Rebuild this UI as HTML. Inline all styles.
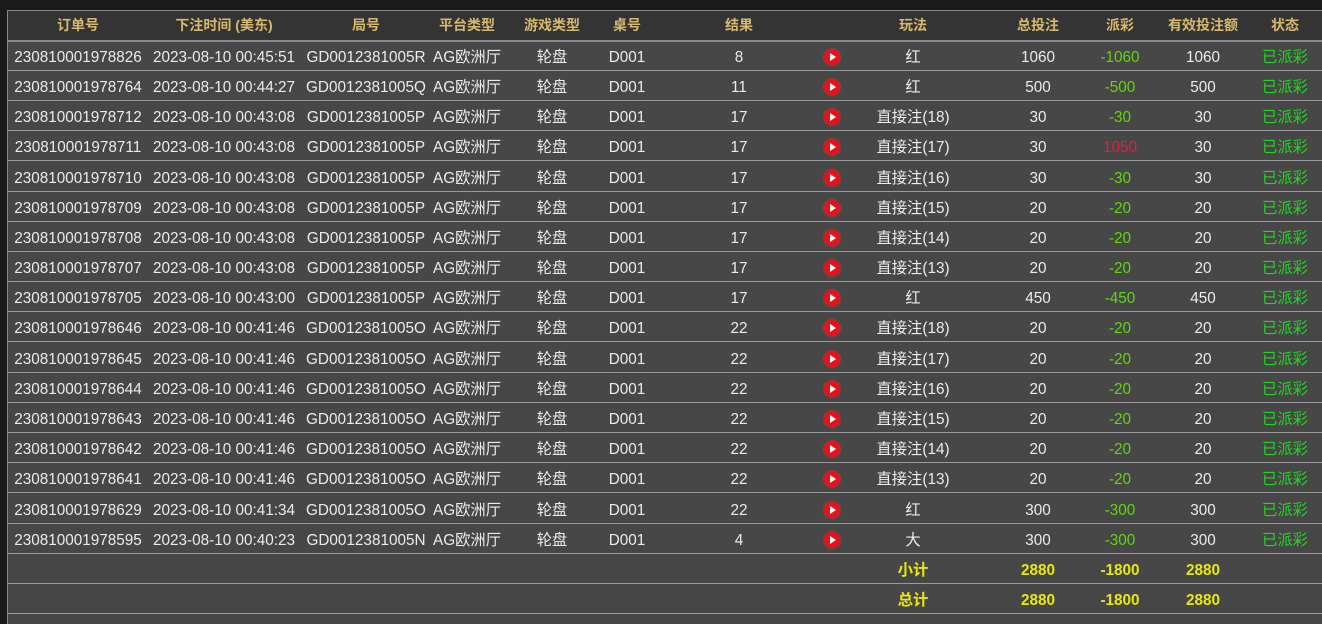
<!DOCTYPE html>
<html><head><meta charset="utf-8"><style>
body{margin:0;width:1322px;height:623px;background:#1b1b1b;overflow:hidden;font-family:"Liberation Sans","Noto Sans CJK SC",sans-serif;position:relative}
.t{position:absolute;left:7px;top:10px;width:1315px;height:613px;background:#474747;border-left:1px solid #8a8a8a;border-top:1px solid #8a8a8a}
.h{position:absolute;left:0;top:0;width:1315px;height:29px;background:#343434;border-bottom:2px solid #8a8a8a}
.r{position:absolute;left:0;width:1315px;height:29px;border-bottom:1px solid #9a9a9a}
.r span,.h span{position:absolute;top:2px;line-height:29px;transform:translateX(-50%);white-space:nowrap;font-size:15.3px;color:#ececec}
.h span{top:0;color:#d8b96c;font-weight:bold;font-size:14px;line-height:28px}
.a{left:70px}.b{left:216px}.c{left:358px}.d{left:459px}.e{left:544px}.f{left:619px}.g{left:731px}.i{left:824px}.j{left:905px}.k{left:1030px}.l{left:1112px}.m{left:1195px}.n{left:1277px}
.r span.l{color:#5fd80a}.r span.n{color:#1fd81f}.r span.red{color:#e0203a}
.r .i{width:16px;height:16px;top:8px;border-radius:50%;background:#e8101a;box-shadow:0 0 2px #f33}
.r .i:after{content:"";position:absolute;left:6px;top:4px;border-left:6px solid #fff;border-top:4px solid transparent;border-bottom:4px solid transparent}
.s span{color:#e8e810 !important;font-weight:bold}
</style></head><body><div class="t">
<div class="h"><span class="a">订单号</span><span class="b">下注时间 (美东)</span><span class="c">局号</span><span class="d">平台类型</span><span class="e">游戏类型</span><span class="f">桌号</span><span class="g">结果</span><span class="j">玩法</span><span class="k">总投注</span><span class="l">派彩</span><span class="m">有效投注额</span><span class="n">状态</span></div>
<div class="r" style="top:30px"><span class="a">230810001978826</span><span class="b">2023-08-10 00:45:51</span><span class="c">GD0012381005R</span><span class="d">AG欧洲厅</span><span class="e">轮盘</span><span class="f">D001</span><span class="g">8</span><span class="i"></span><span class="j">红</span><span class="k">1060</span><span class="l">-1060</span><span class="m">1060</span><span class="n">已派彩</span></div>
<div class="r" style="top:60px"><span class="a">230810001978764</span><span class="b">2023-08-10 00:44:27</span><span class="c">GD0012381005Q</span><span class="d">AG欧洲厅</span><span class="e">轮盘</span><span class="f">D001</span><span class="g">11</span><span class="i"></span><span class="j">红</span><span class="k">500</span><span class="l">-500</span><span class="m">500</span><span class="n">已派彩</span></div>
<div class="r" style="top:90px"><span class="a">230810001978712</span><span class="b">2023-08-10 00:43:08</span><span class="c">GD0012381005P</span><span class="d">AG欧洲厅</span><span class="e">轮盘</span><span class="f">D001</span><span class="g">17</span><span class="i"></span><span class="j">直接注(18)</span><span class="k">30</span><span class="l">-30</span><span class="m">30</span><span class="n">已派彩</span></div>
<div class="r" style="top:120px"><span class="a">230810001978711</span><span class="b">2023-08-10 00:43:08</span><span class="c">GD0012381005P</span><span class="d">AG欧洲厅</span><span class="e">轮盘</span><span class="f">D001</span><span class="g">17</span><span class="i"></span><span class="j">直接注(17)</span><span class="k">30</span><span class="l red">1050</span><span class="m">30</span><span class="n">已派彩</span></div>
<div class="r" style="top:151px"><span class="a">230810001978710</span><span class="b">2023-08-10 00:43:08</span><span class="c">GD0012381005P</span><span class="d">AG欧洲厅</span><span class="e">轮盘</span><span class="f">D001</span><span class="g">17</span><span class="i"></span><span class="j">直接注(16)</span><span class="k">30</span><span class="l">-30</span><span class="m">30</span><span class="n">已派彩</span></div>
<div class="r" style="top:181px"><span class="a">230810001978709</span><span class="b">2023-08-10 00:43:08</span><span class="c">GD0012381005P</span><span class="d">AG欧洲厅</span><span class="e">轮盘</span><span class="f">D001</span><span class="g">17</span><span class="i"></span><span class="j">直接注(15)</span><span class="k">20</span><span class="l">-20</span><span class="m">20</span><span class="n">已派彩</span></div>
<div class="r" style="top:211px"><span class="a">230810001978708</span><span class="b">2023-08-10 00:43:08</span><span class="c">GD0012381005P</span><span class="d">AG欧洲厅</span><span class="e">轮盘</span><span class="f">D001</span><span class="g">17</span><span class="i"></span><span class="j">直接注(14)</span><span class="k">20</span><span class="l">-20</span><span class="m">20</span><span class="n">已派彩</span></div>
<div class="r" style="top:241px"><span class="a">230810001978707</span><span class="b">2023-08-10 00:43:08</span><span class="c">GD0012381005P</span><span class="d">AG欧洲厅</span><span class="e">轮盘</span><span class="f">D001</span><span class="g">17</span><span class="i"></span><span class="j">直接注(13)</span><span class="k">20</span><span class="l">-20</span><span class="m">20</span><span class="n">已派彩</span></div>
<div class="r" style="top:271px"><span class="a">230810001978705</span><span class="b">2023-08-10 00:43:00</span><span class="c">GD0012381005P</span><span class="d">AG欧洲厅</span><span class="e">轮盘</span><span class="f">D001</span><span class="g">17</span><span class="i"></span><span class="j">红</span><span class="k">450</span><span class="l">-450</span><span class="m">450</span><span class="n">已派彩</span></div>
<div class="r" style="top:301px"><span class="a">230810001978646</span><span class="b">2023-08-10 00:41:46</span><span class="c">GD0012381005O</span><span class="d">AG欧洲厅</span><span class="e">轮盘</span><span class="f">D001</span><span class="g">22</span><span class="i"></span><span class="j">直接注(18)</span><span class="k">20</span><span class="l">-20</span><span class="m">20</span><span class="n">已派彩</span></div>
<div class="r" style="top:332px"><span class="a">230810001978645</span><span class="b">2023-08-10 00:41:46</span><span class="c">GD0012381005O</span><span class="d">AG欧洲厅</span><span class="e">轮盘</span><span class="f">D001</span><span class="g">22</span><span class="i"></span><span class="j">直接注(17)</span><span class="k">20</span><span class="l">-20</span><span class="m">20</span><span class="n">已派彩</span></div>
<div class="r" style="top:362px"><span class="a">230810001978644</span><span class="b">2023-08-10 00:41:46</span><span class="c">GD0012381005O</span><span class="d">AG欧洲厅</span><span class="e">轮盘</span><span class="f">D001</span><span class="g">22</span><span class="i"></span><span class="j">直接注(16)</span><span class="k">20</span><span class="l">-20</span><span class="m">20</span><span class="n">已派彩</span></div>
<div class="r" style="top:392px"><span class="a">230810001978643</span><span class="b">2023-08-10 00:41:46</span><span class="c">GD0012381005O</span><span class="d">AG欧洲厅</span><span class="e">轮盘</span><span class="f">D001</span><span class="g">22</span><span class="i"></span><span class="j">直接注(15)</span><span class="k">20</span><span class="l">-20</span><span class="m">20</span><span class="n">已派彩</span></div>
<div class="r" style="top:422px"><span class="a">230810001978642</span><span class="b">2023-08-10 00:41:46</span><span class="c">GD0012381005O</span><span class="d">AG欧洲厅</span><span class="e">轮盘</span><span class="f">D001</span><span class="g">22</span><span class="i"></span><span class="j">直接注(14)</span><span class="k">20</span><span class="l">-20</span><span class="m">20</span><span class="n">已派彩</span></div>
<div class="r" style="top:452px"><span class="a">230810001978641</span><span class="b">2023-08-10 00:41:46</span><span class="c">GD0012381005O</span><span class="d">AG欧洲厅</span><span class="e">轮盘</span><span class="f">D001</span><span class="g">22</span><span class="i"></span><span class="j">直接注(13)</span><span class="k">20</span><span class="l">-20</span><span class="m">20</span><span class="n">已派彩</span></div>
<div class="r" style="top:483px"><span class="a">230810001978629</span><span class="b">2023-08-10 00:41:34</span><span class="c">GD0012381005O</span><span class="d">AG欧洲厅</span><span class="e">轮盘</span><span class="f">D001</span><span class="g">22</span><span class="i"></span><span class="j">红</span><span class="k">300</span><span class="l">-300</span><span class="m">300</span><span class="n">已派彩</span></div>
<div class="r" style="top:513px"><span class="a">230810001978595</span><span class="b">2023-08-10 00:40:23</span><span class="c">GD0012381005N</span><span class="d">AG欧洲厅</span><span class="e">轮盘</span><span class="f">D001</span><span class="g">4</span><span class="i"></span><span class="j">大</span><span class="k">300</span><span class="l">-300</span><span class="m">300</span><span class="n">已派彩</span></div>
<div class="r s" style="top:543px"><span class="j">小计</span><span class="k">2880</span><span class="l">-1800</span><span class="m">2880</span></div>
<div class="r s" style="top:573px"><span class="j">总计</span><span class="k">2880</span><span class="l">-1800</span><span class="m">2880</span></div>
</div></body></html>
